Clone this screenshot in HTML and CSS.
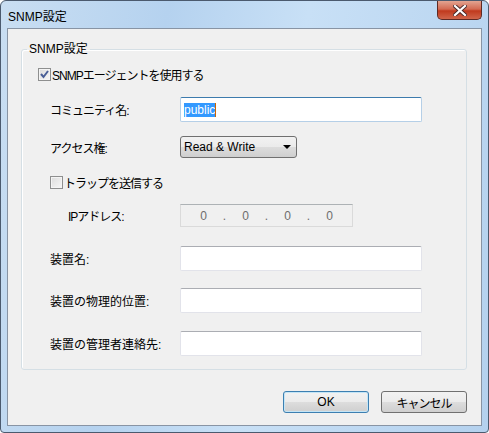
FILE: index.html
```html
<!DOCTYPE html>
<html lang="ja">
<head>
  <meta charset="UTF-8">
  <title>SNMP設定</title>
  <link rel="stylesheet" href="styles.css">
</head>
<body>
  <div class="window">
    <div class="titlebar">
      <span class="title">SNMP設定</span>
      <div class="close">
        <svg width="14" height="11" viewBox="0 0 14 11">
          <path d="M2 1 L12 10 M12 1 L2 10" stroke="#4a2a2a" stroke-width="4" stroke-linecap="square"/>
          <path d="M2 1 L12 10 M12 1 L2 10" stroke="#ffffff" stroke-width="2.2" stroke-linecap="square"/>
        </svg>
      </div>
    </div>
    <div class="client">
      <fieldset class="group">
        <legend>SNMP設定</legend>
        <div class="row row-agent">
          <span class="check checked">
            <svg width="11" height="11" viewBox="0 0 11 11"><path d="M2 5 L4.5 8 L9 2" fill="none" stroke="#4a5f97" stroke-width="2"/></svg>
          </span>
          <span class="kana">SNMPエージェントを使用する</span>
        </div>
        <div class="row row-community">
          <label class="lbl kana">コミュニティ名:</label>
          <div class="edit focus"><span class="sel">public</span><span class="caret"></span></div>
        </div>
        <div class="row row-access">
          <label class="lbl kana">アクセス権:</label>
          <div class="combo"><span>Read &amp; Write</span><span class="arrow"></span></div>
        </div>
        <div class="row row-trap">
          <span class="check"></span>
          <span class="kana">トラップを送信する</span>
        </div>
        <div class="row row-ip">
          <label class="lbl lbl-ip kana">IPアドレス:</label>
          <div class="ip">
            <span>0</span><span class="dot">.</span><span>0</span><span class="dot">.</span><span>0</span><span class="dot">.</span><span>0</span>
          </div>
        </div>
        <div class="row row-field first">
          <label class="lbl">装置名:</label>
          <div class="edit"></div>
        </div>
        <div class="row row-field">
          <label class="lbl">装置の物理的位置:</label>
          <div class="edit"></div>
        </div>
        <div class="row row-field last">
          <label class="lbl">装置の管理者連絡先:</label>
          <div class="edit"></div>
        </div>
      </fieldset>
      <div class="buttons">
        <button class="btn default">OK</button>
        <button class="btn kana">キャンセル</button>
      </div>
    </div>
  </div>
</body>
</html>
```

FILE: styles.css
```css
html, body {
  margin: 0;
  padding: 0;
  background: #ffffff;
}
body {
  font-family: "Liberation Sans", "Noto Sans CJK JP", sans-serif;
  font-size: 12px;
  color: #000;
}
.window {
  width: 489px;
  height: 433px;
  box-sizing: border-box;
  border: 1px solid #4b5a6e;
  border-radius: 6px 6px 4px 4px;
  background: linear-gradient(100deg, #c9def2 0%, #b5d2ef 30%, #c8e0f6 55%, #b4d1ee 100%);
  display: flex;
  flex-direction: column;
  overflow: hidden;
}
.titlebar {
  height: 27px;
  display: flex;
  align-items: flex-start;
  justify-content: space-between;
}
.title {
  margin: 6px 0 0 7px;
  font-size: 12px;
  color: #000;
}
.close {
  width: 45px;
  height: 19px;
  margin-right: 6px;
  box-sizing: border-box;
  border: 1px solid #5e2a24;
  border-top: none;
  border-radius: 0 0 5px 5px;
  background: linear-gradient(#e3a491 0%, #d36a52 45%, #c03a1e 55%, #d0654a 100%);
  display: flex;
  align-items: center;
  justify-content: center;
}
.client {
  margin: 0 6px 6px 6px;
  height: 398px;
  box-sizing: border-box;
  border: 1px solid #8894a4;
  background: #f0f0f0;
  padding: 0 14px 0 13px;
  display: flex;
  flex-direction: column;
}
.group {
  margin: 13px 0 0 0;
  padding: 0 0 13px 0;
  border: 1px solid #d5dfe5;
  border-radius: 3px;
  box-shadow: inset 1px 1px 0 #ffffff;
  height: 328px;
  box-sizing: border-box;
}
.group legend {
  padding: 0 2px;
  margin-left: 5px;
  line-height: 14px;
}
.kana {
  letter-spacing: -1px;
}
.row {
  display: flex;
  align-items: center;
}
.lbl {
  width: 130px;
  padding-left: 28px;
  flex-shrink: 0;
}
.lbl-ip {
  padding-left: 46px;
  width: 112px;
}
.row-agent {
  height: 24px;
  margin-top: 6px;
  padding-left: 16px;
}
.row-community {
  margin-top: 11px;
}
.row-access {
  margin-top: 14px;
}
.row-trap {
  height: 22px;
  margin-top: 13px;
  padding-left: 28px;
}
.row-ip {
  margin-top: 11px;
}
.row-field {
  margin-top: 17px;
}
.row-field.first {
  margin-top: 19px;
}
.row-field.last {
  margin-top: 18px;
}
.check {
  width: 13px;
  height: 13px;
  box-sizing: border-box;
  border: 1px solid #8e8f8f;
  background: linear-gradient(135deg, #dcdcdc, #f7f7f7);
  box-shadow: inset 0 0 0 1px #f4f4f4;
  margin-right: 1px;
  display: flex;
  align-items: center;
  justify-content: center;
}
.edit {
  width: 242px;
  height: 25px;
  box-sizing: border-box;
  border: 1px solid #e2e3ea;
  border-top-color: #abadb3;
  border-radius: 2px;
  background: #fff;
  display: flex;
  align-items: center;
  padding-left: 3px;
}
.edit.focus {
  border-color: #b5cfe7;
  border-top-color: #3d7bad;
}
.sel {
  background: #3399ff;
  color: #fff;
  line-height: 14px;
}
.caret {
  width: 1px;
  height: 14px;
  background: #cc6600;
}
.combo {
  width: 117px;
  height: 22px;
  box-sizing: border-box;
  border: 1px solid #707070;
  border-radius: 3px;
  background: linear-gradient(#f2f2f2 0%, #ebebeb 50%, #dddddd 50%, #cfcfcf 100%);
  display: flex;
  align-items: center;
  justify-content: space-between;
  padding: 0 5px 0 3px;
}
.arrow {
  width: 0;
  height: 0;
  border-left: 4px solid transparent;
  border-right: 4px solid transparent;
  border-top: 4px solid #000;
}
.ip {
  width: 173px;
  height: 23px;
  box-sizing: border-box;
  border: 1px solid #dadada;
  border-top-color: #adb2b5;
  background: #f0f0f0;
  color: #6d6d6d;
  display: flex;
  align-items: center;
  padding-left: 12px;
}
.ip span {
  width: 21px;
  text-align: center;
}
.buttons {
  display: flex;
  justify-content: flex-end;
  gap: 12px;
  margin-top: 21px;
}
.btn {
  width: 86px;
  height: 22px;
  font-family: "Liberation Sans", "Noto Sans CJK JP", sans-serif;
  font-size: 12px;
  border: 1px solid #707070;
  border-radius: 3px;
  background: linear-gradient(#f2f2f2 0%, #ebebeb 50%, #dddddd 50%, #cfcfcf 100%);
  padding: 0;
  color: #000;
}
.btn.default {
  border-color: #3c7fb1;
  box-shadow: inset 0 0 0 1px #c4e5f6;
}
```
